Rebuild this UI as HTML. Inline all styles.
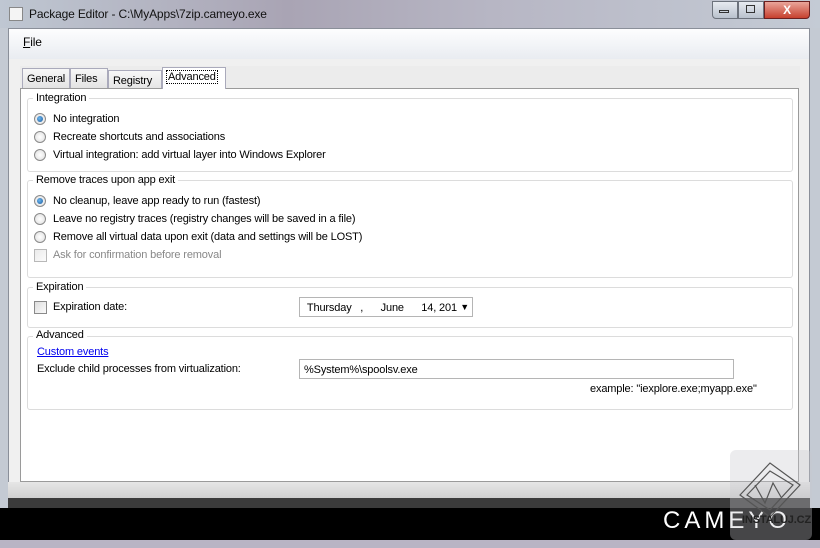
<!DOCTYPE html><html><head><style>
*{margin:0;padding:0;box-sizing:border-box}
body{width:820px;height:548px;overflow:hidden;background:#c4cad3;font-family:"Liberation Sans",sans-serif;font-size:11px;letter-spacing:-0.15px;color:#000;position:relative}
.a{position:absolute}
.title{left:0;top:0;width:820px;height:28px;background:linear-gradient(90deg,#bfc7d2,#a9a4b4 35%,#b7b6c4 60%,#c4cbd5)}
.win{left:8px;top:28px;width:802px;height:470px;background:#f0f0f0;border:1px solid #8a8f99}
.menu{left:9px;top:29px;width:800px;height:30px;background:linear-gradient(#fdfdfe,#e9ecf1)}
.tabbar{left:20px;top:66px;width:780px;height:22px;background:#ececec}
.tab{top:68px;height:20px;border:1px solid #aab;border-bottom:none;background:linear-gradient(#f7f7f7,#e3e3e3);padding:4px 4px 0}
.panel{left:20px;top:88px;width:779px;height:394px;background:#fff;border:1px solid #9a9a9a}
.grp{border:1px solid #dcdcdc;border-radius:3px;left:27px;width:766px}
.gl{background:#fff;padding:0 3px}
.rb{width:12px;height:12px;border-radius:50%;border:1px solid #8a8a8a;background:radial-gradient(#fff,#ddd)}
.rb.on::after{content:"";position:absolute;left:2px;top:2px;width:6px;height:6px;border-radius:50%;background:radial-gradient(circle at 40% 40%,#6cb6ef,#1c5a9c)}
.cb{width:13px;height:13px;border:1px solid #8a8a8a;background:linear-gradient(135deg,#dedede,#fafafa)}
.inp{border:1px solid #b5b5b5;background:#fff;height:20px;padding:4px 4px}
</style></head><body>
<div class="a title"></div>
<div class="a" style="left:9px;top:7px;width:14px;height:14px;background:#f4f4f4;border:1px solid #888"></div>
<div class="a" style="left:29px;top:7px;font-size:12px;color:#111">Package Editor - C:\MyApps\7zip.cameyo.exe</div>
<div class="a" style="left:712px;top:1px;width:26px;height:18px;border:1px solid #6c727c;border-radius:0 0 0 4px;background:linear-gradient(#e6eaf0,#b9c1cd)"></div>
<div class="a" style="left:738px;top:1px;width:26px;height:18px;border:1px solid #6c727c;background:linear-gradient(#e6eaf0,#b9c1cd)"></div>
<div class="a" style="left:764px;top:1px;width:46px;height:18px;border:1px solid #6c2020;border-radius:0 0 4px 0;background:linear-gradient(#e9a59a,#c7402e);color:#fff;font-weight:bold;text-align:center;font-size:12px;line-height:16px">X</div>
<div class="a" style="left:719px;top:10px;width:10px;height:3px;border:1px solid #333"></div>
<div class="a" style="left:746px;top:5px;width:9px;height:8px;border:1px solid #333"></div>
<div class="a win"></div>
<div class="a menu"></div>
<div class="a" style="left:23px;top:35px;font-size:12px"><u>F</u>ile</div>
<div class="a tabbar"></div>
<div class="a tab" style="left:22px;width:48px">General</div>
<div class="a tab" style="left:70px;width:38px">Files</div>
<div class="a tab" style="left:108px;width:54px;top:70px">Registry</div>
<div class="a tab" style="left:162px;width:64px;top:67px;height:22px;background:#fff;z-index:2;padding-top:3px"><span style="outline:1px dotted #000;padding:0 1px">Advanced</span></div>
<div class="a panel"></div>
<div class="a grp" style="top:98px;height:74px"></div>
<div class="a gl" style="left:33px;top:92px">Integration</div>
<div class="a rb on" style="left:34px;top:113px"></div><div class="a" style="left:53px;top:113px">No integration</div>
<div class="a rb" style="left:34px;top:131px"></div><div class="a" style="left:53px;top:131px">Recreate shortcuts and associations</div>
<div class="a rb" style="left:34px;top:149px"></div><div class="a" style="left:53px;top:149px">Virtual integration: add virtual layer into Windows Explorer</div>
<div class="a grp" style="top:180px;height:98px"></div>
<div class="a gl" style="left:33px;top:174px">Remove traces upon app exit</div>
<div class="a rb on" style="left:34px;top:195px"></div><div class="a" style="left:53px;top:195px">No cleanup, leave app ready to run (fastest)</div>
<div class="a rb" style="left:34px;top:213px"></div><div class="a" style="left:53px;top:213px">Leave no registry traces (registry changes will be saved in a file)</div>
<div class="a rb" style="left:34px;top:231px"></div><div class="a" style="left:53px;top:231px">Remove all virtual data upon exit (data and settings will be LOST)</div>
<div class="a cb" style="left:34px;top:249px;opacity:.6"></div><div class="a" style="left:53px;top:249px;color:#888">Ask for confirmation before removal</div>
<div class="a grp" style="top:287px;height:41px"></div>
<div class="a gl" style="left:33px;top:281px">Expiration</div>
<div class="a cb" style="left:34px;top:301px"></div><div class="a" style="left:53px;top:301px">Expiration date:</div>
<div class="a inp" style="left:299px;top:297px;width:174px">&nbsp;Thursday&nbsp;&nbsp;&nbsp;,&nbsp;&nbsp;&nbsp;&nbsp;&nbsp;&nbsp;June&nbsp;&nbsp;&nbsp;&nbsp;&nbsp;&nbsp;14, 201<span style="position:absolute;right:3px;top:4px;font-size:9px">▼</span></div>
<div class="a grp" style="top:336px;height:74px"></div>
<div class="a gl" style="left:33px;top:329px">Advanced</div>
<div class="a" style="left:37px;top:346px;color:#0000ee;text-decoration:underline">Custom events</div>
<div class="a" style="left:37px;top:363px">Exclude child processes from virtualization:</div>
<div class="a inp" style="left:299px;top:359px;width:435px">%System%\spoolsv.exe</div>
<div class="a" style="left:590px;top:383px">example: "iexplore.exe;myapp.exe"</div>
<div class="a" style="left:8px;top:482px;width:802px;height:16px;background:linear-gradient(#e6e6e6,#d0d0d0)"></div>
<div class="a" style="left:8px;top:498px;width:802px;height:10px;background:#3b3b3b"></div>
<div class="a" style="left:0;top:508px;width:820px;height:32px;background:#000"></div>
<div class="a" style="left:0;top:540px;width:820px;height:8px;background:#b9b4c4"></div>
<div class="a" style="left:663px;top:507px;color:#fff;font-size:24px;letter-spacing:4px;font-weight:normal">CAMEYO</div>
<div class="a" style="left:730px;top:450px;width:82px;height:90px;background:rgba(200,200,205,.35);border-radius:6px"></div>
<svg class="a" style="left:735px;top:455px" width="70" height="65" viewBox="0 0 70 65"><g fill="none" stroke="#555" stroke-width="1.2"><path d="M5 40 L35 8 L65 30 L35 62 Z"/><path d="M12 40 L35 16 L58 30 L35 55 Z"/><path d="M20 30 L30 48 L38 28 L46 42"/></g></svg>
<div class="a" style="left:742px;top:514px;color:#222;font-size:11px;font-weight:bold">INSTALUJ.CZ</div>
</body></html>
